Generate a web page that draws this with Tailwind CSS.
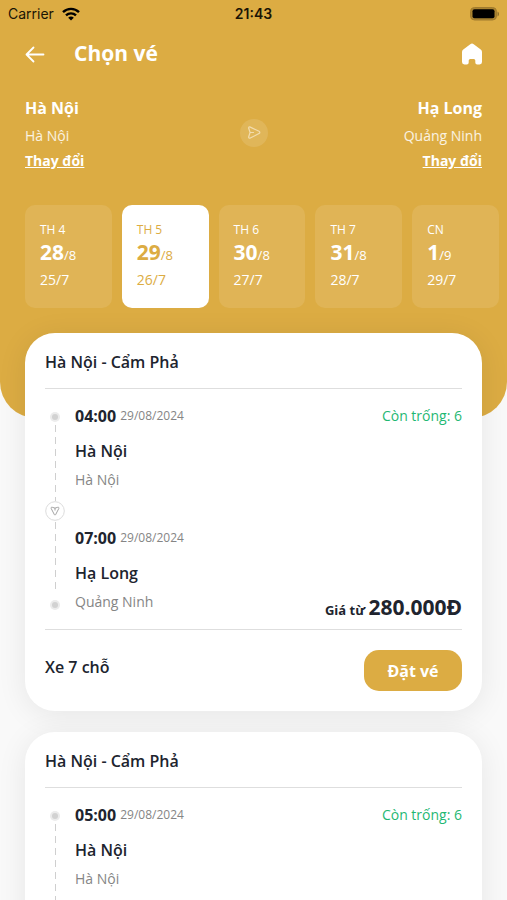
<!DOCTYPE html>
<html lang="vi">
<head>
<meta charset="utf-8">
<meta name="viewport" content="width=device-width, initial-scale=1">
<title>Chọn vé</title>
<script src="https://cdn.jsdelivr.net/npm/@tailwindcss/browser@4"></script>
</head>
<body class="h-screen overflow-hidden bg-[#f9f9f9] font-['Open_Sans','Noto_Sans',sans-serif] text-[#20242e]">
<header class="rounded-b-[36px] bg-[#dcac43] pb-[110px] text-white">
  <div class="grid h-7 grid-cols-3 items-center px-2 font-['Inter',sans-serif] text-sm text-[#1a1405]">
    <div class="flex items-center gap-2">
      <span>Carrier</span>
      <svg class="h-[14px] w-[18px]" viewBox="0 0 18 14" fill="none" stroke="#000" stroke-width="2.4"><path d="M1 5.2C5.500 .8 12.500 .8 17 5.200M4 8.400c2.800-2.700 7.200-2.700 10 0"/><path d="M9 13.500 6.200 10.700c1.600-1.500 4-1.500 5.600 0z" fill="#000" stroke="none"/></svg>
    </div>
    <time class="text-center font-semibold">21:43</time>
    <svg class="h-[14px] w-[30px] justify-self-end" viewBox="0 0 30 14"><rect x="1.500" y=".5" width="26" height="12.500" rx="4" fill="#a9832f" stroke="#a07b2f"/><rect x="3.500" y="2.300" width="22" height="9" rx="2" fill="#000"/><path d="M28.500 4.500c2 .8 2 4.200 0 5z" fill="#8f702c"/></svg>
  </div>
  <div class="flex h-[52px] items-center px-[25px]">
    <button type="button" aria-label="Quay lại" class="mr-[29px]"><svg class="h-5 w-5" viewBox="0 0 20 20" fill="none" stroke="#fff" stroke-width="1.800" stroke-linecap="round" stroke-linejoin="round"><path d="M18.500 10.500H1.500M8.500 3.500l-7 7 7 7"/></svg></button>
    <h1 class="flex-1 pb-0.5 text-[21px] leading-7 font-bold">Chọn vé</h1>
    <a href="#" aria-label="Trang chủ"><svg class="h-[22px] w-5" viewBox="0 0 20 22" fill="#fff"><path d="M8.300 1.200a2.800 2.800 0 0 1 3.400 0l7 5.400A3.200 3.200 0 0 1 20 9.100v10a2.400 2.400 0 0 1-2.400 2.400H15.200A1.900 1.900 0 0 1 13.300 19.600V17.500a1.500 1.500 0 0 0-1.500-1.500H8.200A1.500 1.500 0 0 0 6.700 17.500v2.100A1.900 1.900 0 0 1 4.800 21.500H2.400A2.400 2.400 0 0 1 0 19.100v-10a3.200 3.200 0 0 1 1.300-2.500z"/></svg></a>
  </div>
  <div class="flex items-center justify-between px-[25px] pt-[14px]">
    <div class="w-[120px]">
      <p class="text-base leading-7 font-bold">Hà Nội</p>
      <p class="text-sm leading-7 text-white/85">Hà Nội</p>
      <a href="#" class="block text-sm leading-[22px] font-bold underline">Thay đổi</a>
    </div>
    <svg class="h-7 w-7" viewBox="0 0 28 28" fill="none"><circle cx="14" cy="14" r="14" fill="#fff" fill-opacity=".12"/><path d="M8.700 9.300c-.2-1.200.6-1.700 1.600-1.200l8.700 4.200c1.100.6 1.100 1.600 0 2.200l-8.700 4.500c-1 .5-1.800 0-1.600-1.200l1.400-4.300zM10 13.500h3.500" stroke="#f2dcae" stroke-width="1.200" stroke-linejoin="round" stroke-linecap="round"/></svg>
    <div class="w-[120px] text-right">
      <p class="text-base leading-7 font-bold">Hạ Long</p>
      <p class="text-sm leading-7 text-white/85">Quảng Ninh</p>
      <a href="#" class="block text-sm leading-[22px] font-bold underline">Thay đổi</a>
    </div>
  </div>
  <nav aria-label="Chọn ngày" class="flex gap-[10px] pt-[33px] pr-2 pl-[25px]">
    <button type="button" class="flex-1 rounded-[10px] bg-white/10 py-4 pl-[15px] text-left"><span class="block text-xs leading-[18px]">TH 4</span><span class="block text-[21px] leading-[26px] font-bold">28<span class="text-[13px] font-normal">/8</span></span><span class="block text-sm leading-6">25/7</span></button>
    <button type="button" aria-pressed="true" class="flex-1 rounded-[10px] bg-white py-4 pl-[15px] text-left text-[#dcac43]"><span class="block text-xs leading-[18px]">TH 5</span><span class="block text-[21px] leading-[26px] font-bold">29<span class="text-[13px] font-normal">/8</span></span><span class="block text-sm leading-6">26/7</span></button>
    <button type="button" class="flex-1 rounded-[10px] bg-white/10 py-4 pl-[15px] text-left"><span class="block text-xs leading-[18px]">TH 6</span><span class="block text-[21px] leading-[26px] font-bold">30<span class="text-[13px] font-normal">/8</span></span><span class="block text-sm leading-6">27/7</span></button>
    <button type="button" class="flex-1 rounded-[10px] bg-white/10 py-4 pl-[15px] text-left"><span class="block text-xs leading-[18px]">TH 7</span><span class="block text-[21px] leading-[26px] font-bold">31<span class="text-[13px] font-normal">/8</span></span><span class="block text-sm leading-6">28/7</span></button>
    <button type="button" class="flex-1 rounded-[10px] bg-white/10 py-4 pl-[15px] text-left"><span class="block text-xs leading-[18px]">CN</span><span class="block text-[21px] leading-[26px] font-bold">1<span class="text-[13px] font-normal">/9</span></span><span class="block text-sm leading-6">29/7</span></button>
  </nav>
</header>
<main class="-mt-[85px] flex flex-col gap-[21px] px-[25px]">
  <article class="rounded-[30px] bg-white px-5 pb-5 shadow-[0_4px_30px_rgba(0,0,0,0.08)]">
    <h2 class="border-b border-[#dedede] pt-[15px] pb-3 text-base leading-7 font-semibold">Hà Nội - Cẩm Phả</h2>
    <div class="flex border-b border-[#dedede] pt-[11px] pb-[13px]">
      <svg class="mt-3 h-[200px] w-5" viewBox="0 0 20 200" fill="none"><circle cx="10" cy="5" r="5" fill="#ececec"/><circle cx="10" cy="5" r="3" fill="#d2d2d2"/><path d="M10.500 13v76M10.500 110v72" stroke="#cfcfcf" stroke-width="1" stroke-dasharray="7 5"/><circle cx="10" cy="99" r="9.300" stroke="#dcdcdc"/><path d="M6.200 96.500c-.4-.8.200-1.500 1.100-1.200l2.700.8 2.700-.8c.9-.3 1.500.4 1.100 1.200l-3.100 6c-.4.800-1 .8-1.400 0zM10 96v2.500" stroke="#999" stroke-width=".9" stroke-linejoin="round"/><circle cx="10" cy="193" r="5" fill="#ececec"/><circle cx="10" cy="193" r="3" fill="#d2d2d2"/></svg>
      <div class="flex-1 pl-[10px]">
        <div class="flex h-8 items-center justify-between"><p class="flex items-center gap-1"><time class="text-base font-bold">04:00</time><span class="text-xs text-[#858585]">29/08/2024</span></p><p class="text-sm text-[#1fb873]">Còn trống: 6</p></div>
        <p class="pt-1 text-base leading-[30px] font-semibold">Hà Nội</p>
        <p class="text-sm leading-7 text-[#858585]">Hà Nội</p>
        <div class="mt-7 flex h-8 items-center gap-1"><time class="text-base font-bold">07:00</time><span class="text-xs text-[#858585]">29/08/2024</span></div>
        <div class="flex items-end justify-between">
          <div><p class="pt-1 text-base leading-[30px] font-semibold">Hạ Long</p><p class="text-sm leading-7 text-[#858585]">Quảng Ninh</p></div>
          <p class="-mb-1 text-[13px] leading-5 font-bold">Giá từ <span class="text-[21px]">280.000Đ</span></p>
        </div>
      </div>
    </div>
    <div class="flex items-start justify-between pt-5"><p class="text-base leading-[34px] font-semibold">Xe 7 chỗ</p><button type="button" class="h-[41px] w-[98px] rounded-[15px] bg-[#dcac43] text-base font-bold text-white">Đặt vé</button></div>
  </article>
  <article class="rounded-[30px] bg-white px-5 pb-5 shadow-[0_4px_30px_rgba(0,0,0,0.08)]">
    <h2 class="border-b border-[#dedede] pt-[15px] pb-3 text-base leading-7 font-semibold">Hà Nội - Cẩm Phả</h2>
    <div class="flex pt-[11px] pb-[13px]">
      <svg class="mt-3 h-[200px] w-5" viewBox="0 0 20 200" fill="none"><circle cx="10" cy="5" r="5" fill="#ececec"/><circle cx="10" cy="5" r="3" fill="#d2d2d2"/><path d="M10.500 13v76" stroke="#cfcfcf" stroke-width="1" stroke-dasharray="7 5"/></svg>
      <div class="flex-1 pl-[10px]">
        <div class="flex h-8 items-center justify-between"><p class="flex items-center gap-1"><time class="text-base font-bold">05:00</time><span class="text-xs text-[#858585]">29/08/2024</span></p><p class="text-sm text-[#1fb873]">Còn trống: 6</p></div>
        <p class="pt-1 text-base leading-[30px] font-semibold">Hà Nội</p>
        <p class="text-sm leading-7 text-[#858585]">Hà Nội</p>
      </div>
    </div>
  </article>
</main>
</body>
</html>
